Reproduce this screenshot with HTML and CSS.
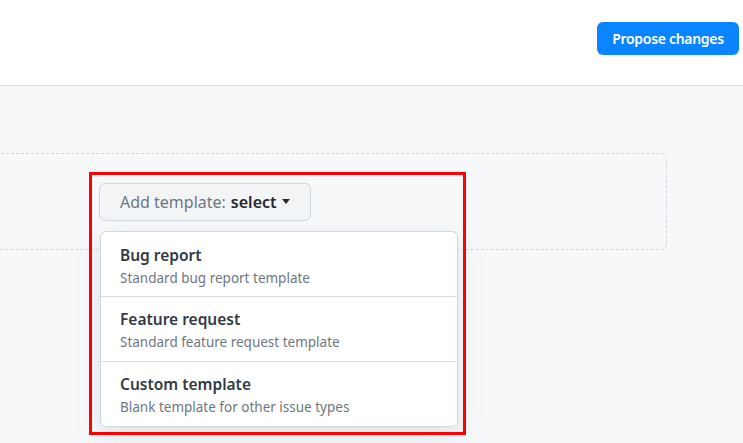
FILE: index.html
```html
<!DOCTYPE html>
<html>
<head>
<meta charset="utf-8">
<link rel="stylesheet" href="styles.css">
</head>
<body>
<header class="topbar">
  <button class="btn-primary">Propose changes</button>
</header>
<main class="content">
  <div class="dropzone">
    <div class="picker">
      <button class="btn-select"><span class="label">Add template:</span><strong>select</strong><span class="caret"></span></button>
      <div class="menu">
        <div class="menu-item">
          <div class="item-title">Bug report</div>
          <div class="item-desc">Standard bug report template</div>
        </div>
        <div class="menu-item">
          <div class="item-title">Feature request</div>
          <div class="item-desc">Standard feature request template</div>
        </div>
        <div class="menu-item">
          <div class="item-title">Custom template</div>
          <div class="item-desc">Blank template for other issue types</div>
        </div>
      </div>
      <div class="highlight"></div>
    </div>
  </div>
</main>
</body>
</html>
```
FILE: styles.css
```css
* { box-sizing: border-box; }
html, body {
  margin: 0;
  height: 100%;
  overflow: hidden;
}
body {
  background: #f6f8fa;
  font-family: "Noto Sans", "Open Sans", sans-serif;
  color: #24292f;
}
.topbar {
  height: 86px;
  background: #ffffff;
  border-bottom: 1px solid #d8dee4;
  display: flex;
  justify-content: flex-end;
  align-items: flex-start;
  padding: 22px 4px 0 0;
}
.btn-primary {
  height: 33px;
  width: 142px;
  background: #0a84ff;
  color: #ffffff;
  border: none;
  border-radius: 6px;
  font-family: inherit;
  font-weight: 600;
  font-size: 14px;
  letter-spacing: -0.3px;
  padding: 0;
}
.content {
  padding-top: 67px;
}
.dropzone {
  margin-left: -10px;
  width: 677px;
  height: 97px;
  border: 1px dashed #d0d7de;
  border-radius: 6px;
  display: flex;
  align-items: center;
  padding-left: 108px;
}
.picker {
  position: relative;
}
.btn-select {
  height: 38px;
  width: 212px;
  background: #f3f4f6;
  border: 1px solid #d0d7de;
  border-radius: 6px;
  font-family: inherit;
  font-size: 16px;
  color: #6e7781;
  padding: 0 0 0 20px;
  display: flex;
  align-items: center;
}
.label {
  margin-right: 5px;
}
.btn-select strong {
  color: #24292f;
  font-weight: 600;
}
.caret {
  width: 0;
  height: 0;
  border-left: 4.5px solid transparent;
  border-right: 4.5px solid transparent;
  border-top: 5px solid #24292f;
  margin-left: 5px;
}
.menu {
  position: absolute;
  top: 48px;
  left: 1px;
  width: 358px;
  background: #ffffff;
  border: 1px solid #d0d7de;
  border-radius: 6px;
  box-shadow: 0 8px 24px rgba(140, 149, 159, 0.2);
  z-index: 2;
}
.menu-item {
  height: 65px;
  padding: 10px 19px 0;
  border-top: 1px solid #d8dee4;
}
.menu-item:first-child {
  border-top: none;
  height: 64px;
  padding-top: 11px;
}
.item-title {
  font-size: 15.5px;
  font-weight: 600;
  color: #333a42;
  line-height: 24px;
}
.item-desc {
  font-size: 13.5px;
  color: #6e7781;
  line-height: 20px;
  margin-top: 1px;
}
.highlight {
  position: absolute;
  left: -10px;
  top: -11px;
  width: 377px;
  height: 263px;
  border: 3px solid #ff0000;
  z-index: 3;
  pointer-events: none;
}
```
